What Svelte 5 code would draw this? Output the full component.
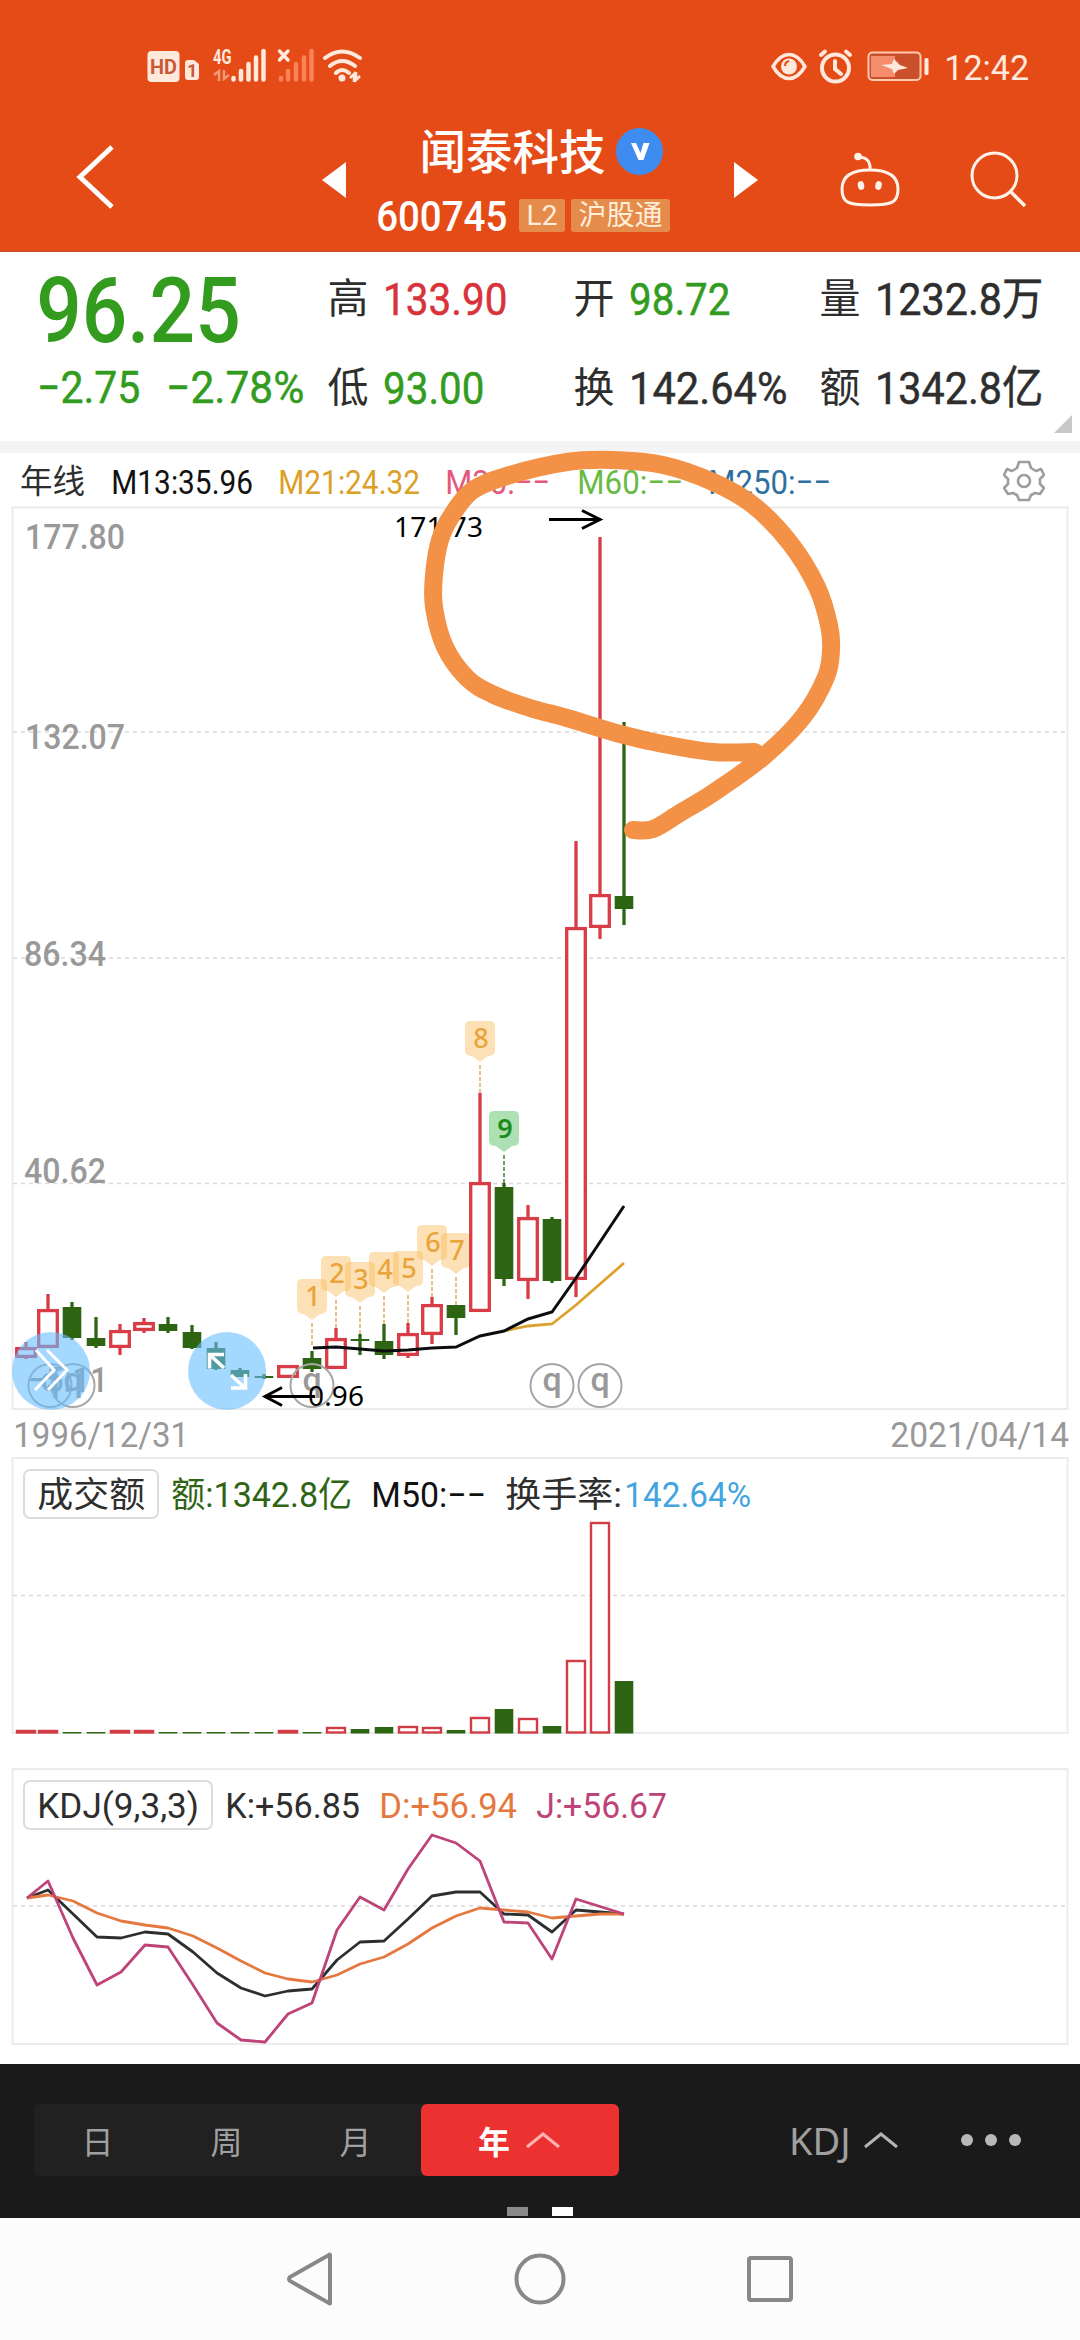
<script>
  const CAP = 0.711; // cap height of the numeric font

  // x centre of every yearly bar
  const barX = (i) => (i === 0 ? 26 : 24 + i * 24);

  // up, high, body top, body bottom, low, top of the turnover bar
  const bars = [
    [true, 1342, 1347, 1358, 1359, 1731],
    [true, 1294, 1309, 1348, 1348, 1731],
    [false, 1302, 1307, 1338, 1340, 1732],
    [false, 1317, 1338, 1346, 1348, 1732],
    [true, 1324, 1330, 1348, 1355, 1731],
    [true, 1318, 1322, 1331, 1333, 1731],
    [false, 1317, 1324, 1331, 1333, 1732],
    [false, 1325, 1332, 1348, 1349, 1732],
    [false, 1342, 1348, 1369, 1370, 1732],
    [false, 1368, 1370, 1377, 1377, 1732],
    [false, 1374, 1376, 1378, 1379, 1732],
    [true, 1365, 1365, 1378, 1378, 1731],
    [false, 1351, 1358, 1369, 1372, 1732],
    [true, 1328, 1338, 1369, 1369, 1728],
    [false, 1334, 1339, 1341, 1355, 1729],
    [false, 1324, 1341, 1355, 1359, 1727],
    [true, 1323, 1333, 1356, 1358, 1727],
    [true, 1297, 1304, 1335, 1344, 1728],
    [false, 1305, 1305, 1318, 1335, 1730],
    [true, 1093, 1182, 1312, 1312, 1718],
    [false, 1183, 1187, 1279, 1286, 1709],
    [true, 1205, 1217, 1281, 1299, 1719],
    [false, 1217, 1219, 1281, 1283, 1726],
    [true, 841, 927, 1280, 1297, 1661],
    [true, 537, 894, 928, 939, 1523],
    [false, 722, 896, 909, 925, 1681],
  ].map(([up, high, top, bottom, low, vol], i) => ({ x: barX(i), up, high, top, bottom, low, vol }));

  const tags = [
    { n: 1, x: 312, y: 1279, to: 1347 },
    { n: 2, x: 336, y: 1256, to: 1328 },
    { n: 3, x: 360, y: 1262, to: 1334 },
    { n: 4, x: 384, y: 1252, to: 1324 },
    { n: 5, x: 408, y: 1251, to: 1323 },
    { n: 6, x: 432, y: 1225, to: 1297 },
    { n: 7, x: 456, y: 1233, to: 1305 },
    { n: 8, x: 480, y: 1021, to: 1093 },
    { n: 9, x: 504, y: 1111, to: 1183 },
  ];

  const ma13 = "313,1348 336,1347 360,1349 384,1351 408,1350 432,1348 456,1347 480,1336 504,1331 528,1319 552,1312 576,1278 600,1242 624,1206";
  const ma21 = "504,1331 528,1326 552,1324 576,1305 600,1284 624,1263";

  const lineJ = "27,1898 48,1881 73,1938 97,1985 121,1972 145,1945 168,1947 193,1985 217,2023 241,2040 265,2042 288,2014 312,2003 337,1930 360,1897 384,1910 408,1869 432,1835 456,1843 480,1861 504,1922 528,1923 552,1959 576,1899 624,1914";
  const lineK = "27,1898 48,1890 97,1937 121,1938 145,1932 168,1934 193,1952 217,1973 241,1988 265,1996 288,1991 312,1989 337,1960 360,1942 384,1941 408,1919 432,1896 456,1892 480,1892 504,1914 528,1915 552,1932 576,1910 624,1914";
  const lineD = "27,1898 48,1895 73,1901 97,1913 121,1921 145,1925 168,1928 193,1936 217,1948 241,1961 265,1973 288,1979 312,1982 337,1975 360,1964 384,1957 408,1944 432,1928 456,1916 480,1908 504,1910 528,1912 552,1918 576,1916 600,1914 624,1914";

  const axis = [
    { text: "177.80", x: 25, y: 549, w: 100, line: null },
    { text: "132.07", x: 25, y: 749, w: 100, line: 732 },
    { text: "86.34", x: 24, y: 966, w: 82, line: 958 },
    { text: "40.62", x: 24, y: 1183, w: 82, line: 1183.5 },
  ];

  const stats = [
    [["高", "133.90", 122, "red"], ["低", "93.00", 99, "green"]],
    [["开", "98.72", 99, "green"], ["换", "142.64%", 156, "dark"]],
    [["量", "1232.8万", 166, "dark"], ["额", "1342.8亿", 166, "dark"]],
  ];

  // hand drawn marker stroke
  const marker = [
    [755, 752], [713, 752], [663, 744], [620, 734], [567, 718], [530, 708], [492, 694],
    [467, 678], [445, 647], [434, 607], [434, 575], [440, 540], [452, 515], [473, 490],
    [510, 475], [567, 462], [613, 460], [663, 465], [713, 482], [753, 505], [790, 543],
    [817, 587], [829, 625], [831, 650], [826, 677], [803, 717], [763, 757], [713, 793],
    [680, 813], [653, 829], [633, 830],
  ];

  function smooth(p) {
    let d = `M${p[0]}`;
    for (let i = 0; i < p.length - 1; i++) {
      const a = p[i - 1] || p[i];
      const b = p[i];
      const c = p[i + 1];
      const e = p[i + 2] || c;
      d += `C${b[0] + (c[0] - a[0]) / 6},${b[1] + (c[1] - a[1]) / 6} ${c[0] - (e[0] - b[0]) / 6},${c[1] - (e[1] - b[1]) / 6} ${c}`;
    }
    return d;
  }
</script>

<!-- Text squeezed to the narrow width of the numeric face -->
{#snippet fit(text, width, size)}
  <svg class="fit" {width} height={size * CAP}>
    <text x={-size * 0.02} y={size * CAP} font-size={size} textLength={width + size * 0.05} lengthAdjust="spacingAndGlyphs">{text}</text>
  </svg>
{/snippet}

{#snippet fund(x)}
  <circle cx={x} cy="1385.5" r="21.5" fill="none" stroke="#a6a6a6" stroke-width="2" />
  <text class="q" {x} y="1391">q</text>
{/snippet}

<div class="screen">
  <header>
    <div class="status">
      <svg width="240" height="40" viewBox="140 46 240 40">
        <g fill="#ffe9dd">
          <rect x="147.500" y="51" width="32" height="31" rx="4" />
          <path d="M185 63q0-3 3-3h6l5 4v13q0 3-3 3h-8q-3 0-3-3z" />
          <text class="mini" x="213" y="63.500" font-size="20" textLength="18.500" lengthAdjust="spacingAndGlyphs">4G</text>
        </g>
        <text class="mini" x="150" y="74" font-size="21" textLength="27" lengthAdjust="spacingAndGlyphs" fill="#c85a38">HD</text>
        <text class="mini" x="187" y="77" font-size="18" fill="#c85a38">1</text>
        <g stroke="#ffe9dd" stroke-width="4.500" stroke-linecap="round">
          <path d="M233.500 78v1.500M241 71v8.500M248.500 64v15.500M256 57.500v22M263.500 51v28.500" />
          <path d="M279.500 51l8.500 9M288 51l-8.500 9" stroke-width="3.500" />
        </g>
        <g stroke="#f98258" stroke-width="4.500" stroke-linecap="round">
          <path d="M281 78v1.500M288 71v8.500M296 64v15.500M304 57.500v22M311.500 51v28.500" />
        </g>
        <path d="M214 75l5-4v10M229 75l-5 4v-9" fill="none" stroke="#f09a76" stroke-width="2.500" />
        <g fill="none" stroke="#ffe9dd" stroke-width="4" stroke-linecap="round">
          <path d="M325 58q17-13 35 0M330 66q12-10 25 0M336 73q6-6 13 0" />
        </g>
        <circle cx="342" cy="78" r="3.500" fill="#ffe9dd" />
        <path d="M350 78l4-4v8M360 76l-4 4v-8" fill="none" stroke="#ffe9dd" stroke-width="2.500" />
      </svg>
      <div class="status-right">
        <svg width="166" height="40" viewBox="768 46 166 40">
          <g fill="none" stroke="#ffe9dd" stroke-width="3.500" stroke-linecap="round">
            <path d="M773 66.500q7-12 16-12t16 12q-7 12-16 12t-16-12z" stroke-linejoin="round" />
            <circle cx="835.500" cy="68" r="13.500" stroke-width="4" />
            <path d="M835 61v8l6 5M821 55l4-3.500M850 55l-4-3.500" stroke-width="4" />
          </g>
          <circle cx="789" cy="66.500" r="8" fill="#ffe9dd" />
          <path d="M785 66q0-4 4-5" fill="none" stroke="#e54b17" stroke-width="2" />
          <rect x="868.500" y="52.500" width="52" height="27.500" rx="4" fill="#c9502a" stroke="#ffc9ae" stroke-width="2" />
          <rect x="871" y="56" width="24" height="21" fill="#f58d6c" />
          <path d="M881 65l11-1 2-5 6 6 8 3-10 2-4 4-2-5z" fill="#ffe9dd" />
          <rect x="924.500" y="58" width="4" height="17" rx="1.500" fill="#ffe9dd" />
        </svg>
        <span class="clock">{@render fit("12:42", 83, 35)}</span>
      </div>
    </div>

    <nav class="titlebar">
      <svg class="back" width="40" height="66" viewBox="75 144 40 66">
        <path d="M112 147L80 177l32 30" fill="none" stroke="#fff" stroke-width="5" />
      </svg>
      <svg class="prev" width="24" height="36"><path d="M24 0v36L0 18z" fill="#fff" /></svg>
      <div class="stock">
        <div class="name">
          <span class="cn">闻泰科技</span>
          <svg width="47" height="47" viewBox="0 0 47 47">
            <circle cx="23.500" cy="23.500" r="23.500" fill="#3f8cf0" />
            <path d="M15 15h5l4.500 10 3-10h6l-6 17h-5z" fill="#fff" />
          </svg>
        </div>
        <div class="code">
          {@render fit("600745", 129, 43)}
          <span class="badge l2">L2</span>
          <span class="badge">沪股通</span>
        </div>
      </div>
      <svg class="next" width="24" height="36"><path d="M0 0v36l24-18z" fill="#fff" /></svg>
      <svg class="robot" width="64" height="58" viewBox="838 152 64 58">
        <g fill="none" stroke="#fff3ea" stroke-width="3">
          <path d="M870 171c17 0 28 5 28 19 0 13-5 16-28 16s-28-3-28-16c0-14 11-19 28-19z" />
          <path d="M858 158q13 0 12 13" />
        </g>
        <g fill="#fff3ea">
          <circle cx="858" cy="157.500" r="3.800" />
          <ellipse cx="861" cy="186.500" rx="3.200" ry="4.400" transform="rotate(-12 861 186.500)" />
          <ellipse cx="878.500" cy="186.500" rx="3.200" ry="4.400" transform="rotate(12 878.500 186.500)" />
        </g>
      </svg>
      <svg width="58" height="58" viewBox="970 151 58 58">
        <circle cx="994.500" cy="175.500" r="22.500" fill="none" stroke="#fff3ea" stroke-width="3" />
        <path d="M1010 191l15 15" stroke="#fff3ea" stroke-width="3.500" />
      </svg>
    </nav>
  </header>

  <section class="quote">
    <div class="last">
      {@render fit("96.25", 200, 91)}
      <div class="change">
        {@render fit("−2.75", 101, 45)}
        {@render fit("−2.78%", 136, 45)}
      </div>
    </div>
    {#each stats as column}
      <div class="column">
        {#each column as [label, value, width, tone]}
          <div class="stat">
            <span class="label">{label}</span>
            <span class={tone}>{@render fit(value, width, 45)}</span>
          </div>
        {/each}
      </div>
    {/each}
    <i class="corner"></i>
  </section>

  <section class="chart">
    <div class="averages">
      <span class="period">年线</span>
      <span class="m13">{@render fit("M13:35.96", 140, 34)}</span>
      <span class="m21">{@render fit("M21:24.32", 140, 34)}</span>
      <span class="m30">{@render fit("M30:−−", 103, 34)}</span>
      <span class="m60">{@render fit("M60:−−", 104, 34)}</span>
      <span class="m250">{@render fit("M250:−−", 121, 34)}</span>
      <svg class="gear" width="42" height="42" viewBox="-21 -21 42 42">
        <path d="M-5-19H5L7-13 12-10 17-12 20-6 16-2V3L20 7 16 13 11 12 7 14 5 19H-5L-7 14-11 12-16 13-20 7-16 3V-2L-20-6-17-12-12-10-7-13z" stroke-linejoin="round" />
        <circle r="6" />
      </svg>
    </div>

    <svg class="plot" width="1080" height="904" viewBox="0 506 1080 904">
      <rect class="frame" x="12.500" y="507.500" width="1055" height="901.500" />
      {#each axis as tick}
        {#if tick.line}
          <path class="dash" d="M13 {tick.line}H1067" />
        {/if}
        <text class="tick" x={tick.x} y={tick.y} textLength={tick.w} lengthAdjust="spacingAndGlyphs">{tick.text}</text>
      {/each}
      <text class="tick" x="28" y="1392" textLength="80" lengthAdjust="spacingAndGlyphs">−5.11</text>

      {#each tags as tag}
        <g class:nine={tag.n === 9} class="tag">
          <path class="stem" d="M{tag.x} {tag.y + 44}V{tag.to}" />
          <path class="flag" d="M{tag.x - 15} {tag.y + 5}q0-5 5-5h20q5 0 5 5v25q0 4-5 5h-2l-8 6-8-6h-2q-5-1-5-5z" />
          <text x={tag.x + 1} y={tag.y + 27}>{tag.n}</text>
        </g>
      {/each}

      {#each bars as bar}
        {#if bar.up}
          <path class="wick up" d="M{bar.x} {bar.high}V{bar.top + 1}M{bar.x} {bar.bottom - 1}V{bar.low}" />
          <rect class="up" x={bar.x - 9.300} y={bar.top + 1.600} width="18.600" height={bar.bottom - bar.top - 3.200} />
        {:else}
          <path class="wick down" d="M{bar.x} {bar.high}V{bar.low}" />
          <rect class="down" x={bar.x - 9.300} y={bar.top} width="18.600" height={bar.bottom - bar.top} />
        {/if}
      {/each}

      <polyline points={ma21} fill="none" stroke="#dca22e" stroke-width="2.800" />
      <polyline points={ma13} fill="none" stroke="#0b0d0f" stroke-width="3" />

      {#each [50, 73, 312, 552, 600] as x}
        {@render fund(x)}
      {/each}

      <g class="arrow">
        <path d="M549 519.500H600M582 510.500L600 519.500 582 528.500" />
        <path d="M315 1396.500H265M282 1387.500L265 1396.500 282 1405.500" />
      </g>
      <text class="extreme" x="394" y="537" textLength="89">171.73</text>
      <text class="extreme" x="308" y="1406" textLength="56">0.96</text>

      <circle cx="51" cy="1371" r="39" fill="#69beff" fill-opacity="0.6" />
      <circle cx="227" cy="1371" r="39" fill="#69beff" fill-opacity="0.6" />
      <g fill="none" stroke="#fff" stroke-width="3">
        <path d="M36 1350l18 20-19 20M47 1350l20 20-19 20" />
        <path d="M224 1354.500h-14.500v14M210 1355l14 13M231 1388h14.500v-14M231 1375l14 13" stroke-width="3.600" />
      </g>
    </svg>

    <div class="dates">
      {@render fit("1996/12/31", 174, 35)}
      {@render fit("2021/04/14", 177, 35)}
    </div>

    <div class="sub">
      <div class="legend">
        <span class="box">{@render fit("成交额", 106, 35)}</span>
        <span class="volume">{@render fit("额:1342.8亿", 179, 35)}</span>
        <span class="m50">{@render fit("M50:−−", 113, 35)}</span>
        <span>{@render fit("换手率:", 115, 35)}</span>
        <span class="rate">{@render fit("142.64%", 125, 35)}</span>
      </div>
      <svg class="layer" width="1080" height="277" viewBox="0 1457 1080 277">
        <rect class="frame" x="12.500" y="1458" width="1055" height="275" />
        <path class="dash" d="M13 1595.500H1067" />
        {#each bars as bar}
          {#if bar.up}
            <rect class="vol-up" x={bar.x - 9} y={bar.vol} width="18" height={1732.500 - bar.vol} />
          {:else}
            <rect class="down" x={bar.x - 9.300} y={bar.vol} width="18.600" height={1733.500 - bar.vol} />
          {/if}
        {/each}
      </svg>
    </div>

    <div class="sub kdj">
      <div class="legend">
        <span class="box">{@render fit("KDJ(9,3,3)", 160, 35)}</span>
        <span>{@render fit("K:+56.85", 133, 35)}</span>
        <span class="d">{@render fit("D:+56.94", 136, 35)}</span>
        <span class="j">{@render fit("J:+56.67", 129, 35)}</span>
      </div>
      <svg class="layer" width="1080" height="277" viewBox="0 1768 1080 277">
        <rect class="frame" x="12.500" y="1769" width="1055" height="275" />
        <path class="dash" d="M13 1906H1067" />
        <g fill="none" stroke-width="2.800" stroke-linejoin="round">
          <polyline points={lineK} stroke="#2b2f30" />
          <polyline points={lineD} stroke="#e5783f" />
          <polyline points={lineJ} stroke="#bd4379" />
        </g>
      </svg>
    </div>

    <svg class="marker" width="440" height="410" viewBox="410 440 440 410">
      <path d={smooth(marker)} />
    </svg>
  </section>

  <footer class="toolbar">
    <div class="tools">
      <div class="tabs">
        <span class="tab">日</span>
        <span class="tab">周</span>
        <span class="tab">月</span>
        <span class="tab active">
          年
          <svg width="34" height="18"><path d="M1 16L17 3l16 13" fill="none" stroke="#ffb3b0" stroke-width="3" /></svg>
        </span>
      </div>
      <span class="indicator">
        KDJ
        <svg width="34" height="18"><path d="M1 16L17 3l16 13" fill="none" stroke="#b4b4b4" stroke-width="3" /></svg>
      </span>
      <span class="more"><i></i><i></i><i></i></span>
    </div>
    <div class="pages"><i></i><i class="on"></i></div>
  </footer>

  <div class="system">
    <svg width="48" height="56" viewBox="0 0 48 56"><path d="M44 4v48q0 1-1 0L4 30q-2-2 0-4L43 4q1-1 1 0z" /></svg>
    <svg width="52" height="52" viewBox="0 0 52 52"><circle cx="26" cy="26" r="23.500" /></svg>
    <svg width="48" height="48" viewBox="0 0 48 48"><rect x="3" y="3" width="42" height="42" rx="2" /></svg>
  </div>
</div>

<style>
  :global(body) {
    margin: 0;
    background: #fff;
  }

  .screen {
    display: flex;
    flex-direction: column;
    width: 1080px;
    height: 2340px;
    overflow: hidden;
    color: #2e2e2e;
    font-family: Roboto, "Noto Sans CJK SC", sans-serif;
  }

  svg {
    display: block;
    flex: none;
  }

  .fit {
    overflow: visible;
    fill: currentColor;
    font-weight: 500;
  }

  header {
    box-sizing: border-box;
    height: 252px;
    background: #e54b17;
    border-bottom: 1px solid #c65026;
    color: #fff;
  }

  .status {
    box-sizing: border-box;
    display: flex;
    align-items: center;
    justify-content: space-between;
    height: 120px;
    padding: 12px 52px 0 140px;
  }

  .status-right {
    display: flex;
    align-items: center;
    gap: 11px;
  }

  .clock {
    padding-top: 2px;
    color: #ffe9dd;
  }

  .clock .fit,
  .clock :global(.fit) {
    font-weight: 400;
  }

  .mini {
    font-weight: 700;
  }

  .titlebar {
    display: flex;
    align-items: center;
    height: 120px;
    padding: 0 52px 0 75px;
  }

  .back {
    margin: -6px 207px 0 0;
  }

  .stock {
    display: flex;
    flex-direction: column;
    align-items: center;
    gap: 24px;
    width: 390px;
  }

  .name {
    display: flex;
    align-items: center;
    gap: 10px;
    height: 47px;
    padding-left: 2px;
    font-size: 46.5px;
    font-weight: 500;
    line-height: 47px;
  }

  .cn {
    padding-top: 4px;
  }

  .code {
    display: flex;
    align-items: center;
    gap: 6px;
    margin-right: 33px;
  }

  .badge {
    width: 99px;
    height: 33px;
    border-radius: 3px;
    background: #e58b4b;
    color: #ffeeda;
    font-size: 28px;
    line-height: 33px;
    text-align: center;
  }

  .l2 {
    width: 46px;
    margin-left: 7px;
  }

  .next {
    margin-right: 80px;
  }

  .robot {
    margin-right: 68px;
  }

  .quote {
    position: relative;
    display: flex;
    height: 189px;
    padding-left: 38px;
    border-bottom: 12px solid #f4f4f4;
  }

  .last {
    width: 288px;
    padding-top: 25px;
    color: #339c1f;
  }

  .change {
    display: flex;
    gap: 28px;
    margin-top: 29px;
  }

  .column {
    width: 246px;
    padding-top: 2px;
  }

  .column :global(.fit),
  .change :global(.fit) {
    font-weight: 400;
    stroke: currentColor;
    stroke-width: 0.5px;
  }

  .stat {
    display: flex;
    align-items: center;
    gap: 14px;
    height: 89px;
  }

  .label {
    width: 44px;
    font-size: 41px;
    line-height: 50px;
    text-align: center;
  }

  .red {
    color: #d8323a;
  }

  .green {
    color: #339c1f;
  }

  .dark {
    color: #2e2e2e;
  }

  .corner {
    position: absolute;
    right: 8px;
    bottom: 8px;
    border-left: 18px solid transparent;
    border-bottom: 18px solid #c8c8c8;
  }

  .chart {
    position: relative;
    height: 1611px;
  }

  .averages {
    display: flex;
    align-items: center;
    gap: 27px;
    height: 53px;
    padding: 5px 35px 0 20px;
    box-sizing: border-box;
  }

  .averages :global(.fit),
  .legend :global(.fit),
  .dates :global(.fit) {
    font-weight: 400;
  }

  .period {
    font-size: 32.5px;
    line-height: 40px;
  }

  .m13 {
    color: #111;
  }

  .m21 {
    color: #dba026;
  }

  .m30 {
    color: #e3587c;
  }

  .m60 {
    color: #69bb44;
    margin-left: 2px;
  }

  .m250 {
    color: #2f6f9f;
  }

  .gear {
    margin: -3px 0 0 auto;
    fill: none;
    stroke: #9d9d9d;
    stroke-width: 2.6;
  }

  .plot {
    overflow: visible;
  }

  .frame {
    fill: none;
    stroke: #ececec;
    stroke-width: 2;
  }

  .dash {
    stroke: #dadada;
    stroke-width: 1.6;
    stroke-dasharray: 4 4;
  }

  .tick {
    fill: #999;
    font-size: 35px;
    font-weight: 500;
  }

  .wick {
    stroke-width: 3.3;
  }

  .up {
    fill: #fff;
    stroke: #d83c47;
    stroke-width: 3.3;
  }

  .wick.down {
    stroke: #2e6513;
  }

  rect.down {
    fill: #2e6513;
  }

  .vol-up {
    fill: #fff;
    stroke: #d23c44;
    stroke-width: 2.4;
  }

  .tag text {
    fill: #e9a43a;
    font-family: "Noto Sans", sans-serif;
    font-size: 27px;
    font-weight: 500;
    text-anchor: middle;
  }

  .flag {
    fill: #fbb850;
    fill-opacity: 0.42;
  }

  .stem {
    stroke: #d9a24a;
    stroke-width: 1.3;
    stroke-dasharray: 4 2;
  }

  .nine text {
    fill: #1d8c1d;
    font-weight: 600;
  }

  .nine .flag {
    fill: #3fb54a;
  }

  .nine .stem {
    stroke: #2e6513;
  }

  .q {
    fill: #999;
    font-size: 34px;
    font-weight: 500;
    text-anchor: middle;
  }

  .arrow {
    fill: none;
    stroke: #000;
    stroke-width: 3;
  }

  .extreme {
    fill: #000;
    font-family: "Noto Sans", sans-serif;
    font-size: 28px;
  }

  .dates {
    display: flex;
    justify-content: space-between;
    align-items: center;
    height: 47px;
    padding: 2px 12px 0 14px;
    box-sizing: border-box;
    color: #999;
  }

  .sub {
    position: relative;
    height: 277px;
  }

  .kdj {
    margin-top: 34px;
  }

  .layer {
    position: absolute;
    left: 0;
    top: 0;
  }

  .legend {
    display: flex;
    align-items: center;
    gap: 21px;
    padding: 12px 0 0 23px;
  }

  .box {
    box-sizing: border-box;
    display: flex;
    align-items: center;
    justify-content: center;
    min-width: 133px;
    height: 50px;
    margin-right: -8px;
    padding: 0 13px;
    border: 2px solid #dcdcdc;
    border-radius: 7px;
  }

  .volume {
    color: #2f6414;
  }

  .m50 {
    color: #111;
  }

  .rate {
    margin-left: -17px;
    color: #43a5e0;
  }

  .d {
    color: #e5783f;
  }

  .j {
    color: #bd4379;
  }

  .marker {
    position: absolute;
    left: 410px;
    top: -13px;
    fill: none;
    stroke: #f39147;
    stroke-width: 18;
    stroke-linecap: round;
    stroke-linejoin: round;
  }

  .toolbar {
    height: 154px;
    background: #1a1a1a;
    color: #a0a0a0;
  }

  .tools {
    display: flex;
    align-items: center;
    height: 112px;
    padding: 40px 59px 0 34px;
    box-sizing: border-box;
  }

  .tabs {
    display: flex;
    width: 585px;
    height: 72px;
    border-radius: 5px;
    background: #212121;
  }

  .tab {
    display: flex;
    align-items: center;
    justify-content: center;
    gap: 16px;
    width: 129px;
    padding-right: 2px;
    box-sizing: border-box;
    font-size: 32px;
  }

  .active {
    width: 198px;
    border-radius: 6px;
    background: #ec3131;
    color: #fff;
    font-weight: 700;
  }

  .indicator {
    display: flex;
    align-items: center;
    gap: 13px;
    margin-left: 170px;
    font-family: "Noto Sans", sans-serif;
    font-size: 38px;
    line-height: 44px;
  }

  .more {
    display: flex;
    gap: 12px;
    margin-left: auto;
  }

  .more i {
    width: 12px;
    height: 12px;
    border-radius: 50%;
    background: #b8b8b8;
  }

  .pages {
    display: flex;
    justify-content: center;
    gap: 24px;
    padding-top: 31px;
  }

  .pages i {
    width: 21px;
    height: 9px;
    background: #8a8a8a;
  }

  .pages .on {
    background: #fff;
  }

  .system {
    display: flex;
    align-items: center;
    flex: 1;
    gap: 180px;
    padding-left: 286px;
    background: #fcfcfc;
    fill: none;
    stroke: #888;
    stroke-width: 4;
  }
</style>
